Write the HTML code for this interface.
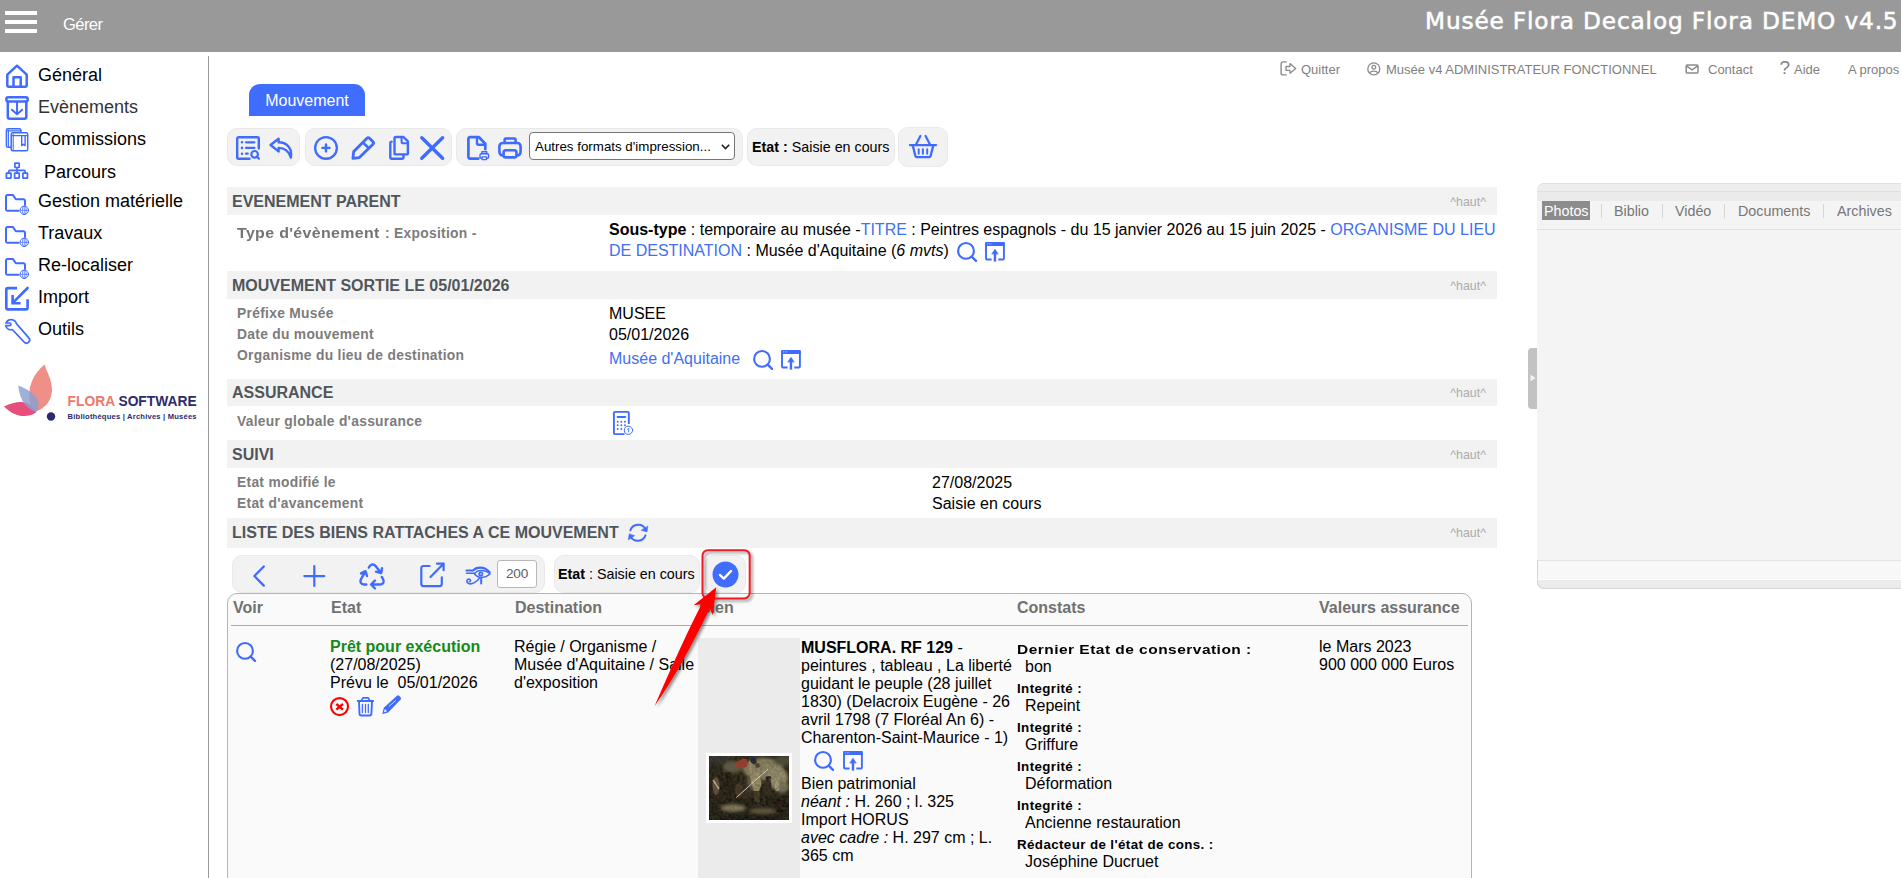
<!DOCTYPE html>
<html lang="fr">
<head>
<meta charset="utf-8">
<title>Musée Flora - Mouvement</title>
<style>
*{box-sizing:border-box}
html,body{margin:0;padding:0}
body{width:1901px;height:878px;overflow:hidden;position:relative;background:#fff;font-family:"Liberation Sans",Arial,sans-serif;color:#000;font-size:16px}
svg{display:block;overflow:visible}
.ic{position:absolute;fill:none;stroke:#3f6bff;stroke-width:2;stroke-linecap:round;stroke-linejoin:round}
.icg{position:absolute;fill:none;stroke:#8a8a8a;stroke-width:2;stroke-linecap:round;stroke-linejoin:round}
.icr{position:absolute;fill:none;stroke:#ff0000;stroke-width:2;stroke-linecap:round;stroke-linejoin:round}
.bl{color:#4170f2}
/* header */
#hdr{position:absolute;left:0;top:0;width:1901px;height:52px;background:#999}
#hdr .bar{position:absolute;left:5px;width:32px;height:4px;background:#fff}
#gerer{position:absolute;left:63px;top:14px;color:#fff;font-size:16.5px;line-height:20px;letter-spacing:-0.55px}
#title{position:absolute;right:2.5px;top:5.5px;color:#fff;font-family:'DejaVu Sans','Liberation Sans',sans-serif;font-size:23.2px;line-height:30px;font-weight:normal;white-space:nowrap;letter-spacing:0.86px;-webkit-text-stroke:0.55px #fff}
/* sidebar */
#side .it{position:absolute;left:38px;font-size:18px;line-height:22px;white-space:nowrap;color:#000}
#divider{position:absolute;left:208px;top:56px;width:1px;height:830px;background:#9a9a9a}
/* top links */
#links span{position:absolute;top:61.6px;font-size:13px;line-height:16px;color:#7f7f7f;white-space:nowrap}
/* tab */
#tab{position:absolute;left:249px;top:84px;width:116px;height:32px;background:#416dff;border-radius:11px 11px 0 0;color:#fff;font-size:16px;line-height:33px;text-align:center}
/* toolbar */
.grp{position:absolute;top:128px;height:38px;background:#f2f2f2;border:1px solid #e9e9e9;border-radius:10px}
.sec{position:absolute;left:227px;width:1270px;height:28px;background:#f2f2f2;color:#50565b;font-weight:bold;font-size:16px;line-height:30px;padding-left:5px;white-space:nowrap}
.sec i{position:absolute;right:11px;top:-0.5px;font-style:normal;font-weight:normal;font-size:12.4px;color:#acacac}
.lbl{position:absolute;left:237px;font-weight:bold;font-size:13.8px;line-height:18px;color:#7c7c7c;white-space:nowrap;letter-spacing:0.3px}
.lblw{transform:scaleX(1.154);transform-origin:0 50%}
.val{position:absolute;font-size:16px;line-height:21px;white-space:nowrap}
.t{position:absolute;white-space:nowrap;font-size:16px;line-height:18px}
.th{position:absolute;top:599px;font-weight:bold;font-size:16px;line-height:18px;color:#717171;white-space:nowrap}
.cl{position:absolute;left:1017px;font-weight:bold;font-size:13.33px;line-height:16px;white-space:nowrap;letter-spacing:0.4px}
.clw{transform:scaleX(1.164);transform-origin:0 50%}
.cv{position:absolute;left:1025px;font-size:16px;line-height:18px;white-space:nowrap}
</style>
</head>
<body>
<div id="hdr">
  <div class="bar" style="top:11px"></div><div class="bar" style="top:20px"></div><div class="bar" style="top:29px"></div>
  <div id="gerer">Gérer</div>
  <div id="title">Musée Flora Decalog Flora DEMO v4.5</div>
</div>
<div id="side"><svg class="ic" style="left:6px;top:64px;" width="22" height="24" viewBox="0 0 22 24"><path d="M11 1.7 L1.3 10.6 V21.2 a1.5 1.5 0 0 0 1.5 1.5 H19.2 a1.5 1.5 0 0 0 1.5 -1.5 V10.6 Z" stroke-width="2.5"/><path d="M7.5 22.5 V13.3 H14.7 V22.5" stroke-width="2.5"/></svg><svg class="ic" style="left:5px;top:96px;" width="24" height="24" viewBox="0 0 24 24"><rect x="1.4" y="1.3" width="21.3" height="4.2" rx="1.8" stroke-width="2.5"/><path d="M2.8 6 V20.8 a2 2 0 0 0 2 2 H19.3 a2 2 0 0 0 2 -2 V6" stroke-width="2.5"/><path d="M12.04 6.6 V17.6 M6.9 13.7 L12.04 18.3 L17.2 13.7" stroke-width="2"/></svg><svg class="ic" style="left:5px;top:127px;" width="25" height="26" viewBox="0 0 25 26"><rect x="1.4" y="1.7" width="14.5" height="18.6" rx="1.6" stroke-width="1.5"/><path d="M2.6 3.9 H16" stroke-width="1.3"/><path d="M3.4 3 V19.5" stroke-width="1.1"/><rect x="6.2" y="5.8" width="16.5" height="18" rx="1.6" stroke-width="1.5" fill="#fff"/><path d="M7.4 8.7 H22.6" stroke-width="1.3"/><path d="M8.2 7 V23" stroke-width="1.1"/><path d="M16.7 9.2 V18.6 L18.4 17.2 L20.1 18.6 V9.2" stroke-width="1.4"/></svg><svg class="ic" style="left:5px;top:161px;" width="24" height="20" viewBox="0 0 24 20"><rect x="9.9" y="2.2" width="4.3" height="4.3" rx="0.4" stroke-width="1.7"/><rect x="1.4" y="12.2" width="4.6" height="5" rx="0.4" stroke-width="1.7"/><rect x="9.6" y="12.2" width="4.6" height="5" rx="0.4" stroke-width="1.7"/><rect x="17.9" y="12.2" width="4.6" height="5" rx="0.4" stroke-width="1.7"/><path d="M12 6.5 V12.2 M3.7 12.2 V10.4 a1 1 0 0 1 1 -1 H19.2 a1 1 0 0 1 1 1 V12.2" stroke-width="1.6"/></svg><svg class="ic" style="left:5px;top:190px;" width="25" height="26" viewBox="0 0 25 26"><path d="M13.5 20.8 H2.6 a1.6 1.6 0 0 1 -1.6 -1.6 V6.5 a1.6 1.6 0 0 1 1.6 -1.6 H7.8 L10.8 9.3 H18.4 a1.6 1.6 0 0 1 1.6 1.6 V15" stroke-width="2"/><g stroke-width="0.8"><circle cx="19.3" cy="20.3" r="4.2" stroke-width="1"/><path d="M15.2 20.3 H23.4 M19.3 16.1 V24.5" stroke-width="0.7"/><ellipse cx="19.3" cy="20.3" rx="2" ry="4.2" stroke-width="0.7"/></g></svg><svg class="ic" style="left:5px;top:222px;" width="25" height="26" viewBox="0 0 25 26"><path d="M13.5 20.8 H2.6 a1.6 1.6 0 0 1 -1.6 -1.6 V6.5 a1.6 1.6 0 0 1 1.6 -1.6 H7.8 L10.8 9.3 H18.4 a1.6 1.6 0 0 1 1.6 1.6 V15" stroke-width="2"/><g stroke-width="0.8"><circle cx="19.3" cy="20.3" r="4.2" stroke-width="1"/><path d="M15.2 20.3 H23.4 M19.3 16.1 V24.5" stroke-width="0.7"/><ellipse cx="19.3" cy="20.3" rx="2" ry="4.2" stroke-width="0.7"/></g></svg><svg class="ic" style="left:5px;top:254px;" width="25" height="26" viewBox="0 0 25 26"><path d="M13.5 20.8 H2.6 a1.6 1.6 0 0 1 -1.6 -1.6 V6.5 a1.6 1.6 0 0 1 1.6 -1.6 H7.8 L10.8 9.3 H18.4 a1.6 1.6 0 0 1 1.6 1.6 V15" stroke-width="2"/><g stroke-width="0.8"><circle cx="19.3" cy="20.3" r="4.2" stroke-width="1"/><path d="M15.2 20.3 H23.4 M19.3 16.1 V24.5" stroke-width="0.7"/><ellipse cx="19.3" cy="20.3" rx="2" ry="4.2" stroke-width="0.7"/></g></svg><svg class="ic" style="left:5px;top:286px;" width="24" height="25" viewBox="0 0 24 25"><path d="M12 2.1 H2.8 A1.5 1.5 0 0 0 1.3 3.6 V21.9 A1.5 1.5 0 0 0 2.8 23.4 H21.1 A1.5 1.5 0 0 0 22.6 21.9 V13.2" stroke-width="2.6" stroke-linecap="butt"/><path d="M22.6 2 L7.8 16.9" stroke-width="2.6"/><path d="M7.6 9 V17.3 H15.6" stroke-width="2.6" stroke-linecap="butt" stroke-linejoin="miter"/></svg><svg class="ic" style="left:5px;top:318px;" width="25" height="26" viewBox="0 0 25 26"><path d="M1 5 A5.5 5.5 0 0 1 11.4 5.6 L23.6 19.6 A3 3 0 0 1 19.2 24.2 L7.3 11.5 A5.5 5.5 0 0 1 0.7 7.7 L4.6 7.7 A1.35 1.35 0 0 0 4.6 5 Z" stroke-width="1.7"/></svg>
  <div class="it" style="top:64px">Général</div>
  <div class="it" style="top:96px;color:#333">Evènements</div>
  <div class="it" style="top:128px">Commissions</div>
  <div class="it" style="top:161px;left:44px">Parcours</div>
  <div class="it" style="top:190px">Gestion matérielle</div>
  <div class="it" style="top:222px">Travaux</div>
  <div class="it" style="top:254px">Re-localiser</div>
  <div class="it" style="top:286px">Import</div>
  <div class="it" style="top:318px">Outils</div>
<svg style="position:absolute;left:0;top:360px" width="205" height="66" viewBox="0 0 205 66">
  <path d="M44.5 4.5 C31 16 25 32 33 52 C45 50 52 40 52 30 C52 20 47 12 44.5 4.5 Z" fill="#f08f87"/>
  <path d="M4 46.5 C14 42 24 40 30 45 C33 47 35 50 36 52.5 C28 58 15 58 4 46.5 Z" fill="#e84d7c"/>
  <path d="M18.2 25.4 C25 28 36 33 38.7 42 C39.5 46 38 49.5 36.3 52.2 C27 49 20 42 18.2 25.4 Z" fill="#8b9fd0" fill-opacity="0.82"/>
  <circle cx="51" cy="56.5" r="4.2" fill="#2d2a6e"/>
  <text x="67.6" y="45.5" font-family="'Liberation Sans',Arial,sans-serif" font-weight="bold" font-size="13.8" letter-spacing="0" fill="#f0776c">FLORA <tspan fill="#2d2a6e">SOFTWARE</tspan></text>
  <text x="67.6" y="59" font-family="'Liberation Sans',Arial,sans-serif" font-weight="bold" font-size="7.6" letter-spacing="0.2" fill="#2d2a6e">Bibliothèques | Archives | Musées</text>
</svg>
</div>
<div id="divider"></div>
<div id="links"><svg class="icg" style="left:1280px;top:60.5px;" width="17" height="15" viewBox="0 0 17 15"><path d="M6.2 0.9 H3.1 a2 2 0 0 0 -2 2 V11.9 a2 2 0 0 0 2 2 H6.2" stroke-width="1.4"/><path d="M6 5.5 H10 V2.6 L15.7 7.4 L10 12.2 V9.4 H6 Z" stroke-width="1.3"/></svg><svg class="icg" style="left:1367px;top:62px;" width="14" height="14" viewBox="0 0 14 14"><circle cx="6.8" cy="6.9" r="6" stroke-width="1.3"/><circle cx="6.8" cy="5.3" r="1.9" stroke-width="1.2"/><path d="M3.1 10.9 C4 8.4 9.6 8.4 10.5 10.9" stroke-width="1.3"/></svg><svg class="icg" style="left:1685px;top:63.5px;" width="14" height="11" viewBox="0 0 14 11"><rect x="1.2" y="1.1" width="11.8" height="8" rx="1.2" stroke-width="1.5"/><path d="M1.8 2.2 L7.1 5.8 L12.4 2.2" stroke-width="1.4"/></svg>
  <span style="left:1301px">Quitter</span>
  <span style="left:1386px">Musée v4 ADMINISTRATEUR FONCTIONNEL</span>
  <span style="left:1708px">Contact</span>
  <span style="left:1779.5px;font-size:19px;top:59.5px">?</span>
  <span style="left:1794px">Aide</span>
  <span style="left:1848px">A propos</span>
</div>
<div id="tab">Mouvement</div>
<div class="grp" style="left:227px;width:73px"></div><div class="grp" style="left:305px;width:147px"></div><div class="grp" style="left:456px;width:287px"></div><div class="grp" style="left:747px;width:148px"></div><div class="grp" style="left:898px;width:50px;top:127px;height:40px"></div><svg class="ic" style="left:236px;top:136px;" width="24" height="24" viewBox="0 0 24 24"><path d="M13.5 22.8 H2.7 a1.5 1.5 0 0 1 -1.5 -1.5 V2.7 a1.5 1.5 0 0 1 1.5 -1.5 H21.3 a1.5 1.5 0 0 1 1.5 1.5 V12.5" stroke-width="2.4"/><path d="M10 6.3 H18.4 M10 11.9 H18.4 M10 17.7 H11.8" stroke-width="2.2"/><path d="M6 6.3 h0.01 M6 11.9 h0.01 M6 17.7 h0.01" stroke-width="2.6"/><circle cx="18.6" cy="18.3" r="3.3" stroke-width="2.2"/><path d="M21.2 20.9 L23 22.7" stroke-width="2.2"/></svg><svg class="ic" style="left:268.5px;top:136px;" width="25" height="24" viewBox="0 0 25 24"><path d="M9.6 2.8 L1.5 9 L9.6 15.4 V11.9 C15 11.9 19.5 14 21.9 21.6 C23.4 13 18.5 6.5 9.6 6.3 Z" stroke-width="2.4"/></svg><svg class="ic" style="left:314px;top:136px;" width="24" height="24" viewBox="0 0 24 24"><circle cx="12" cy="11.9" r="10.85" stroke-width="2.3"/><path d="M12 8.4 V15.4 M8.5 11.9 H15.5" stroke-width="2.4"/></svg><svg class="ic" style="left:351px;top:136px;" width="24.5" height="24" viewBox="0 0 24.5 24"><path d="M16.2 2 a1.4 1.4 0 0 1 2 0 L22.2 6 a1.4 1.4 0 0 1 0 2 L8.4 21.6 L1.9 22.3 L2.7 15.6 Z" stroke-width="2.8"/><path d="M13 7.5 L17.6 12" stroke-width="2.6"/></svg><svg class="ic" style="left:388px;top:136px;" width="22" height="24" viewBox="0 0 22 24"><path d="M8 1 H15.5 L19.9 5.4 V16.9 a1.5 1.5 0 0 1 -1.5 1.5 H8 a1.5 1.5 0 0 1 -1.5 -1.5 V2.5 a1.5 1.5 0 0 1 1.5 -1.5 Z" stroke-width="2.4"/><path d="M13.6 1.6 V6 a1.3 1.3 0 0 0 1.3 1.3 H19.3" stroke-width="2"/><path d="M3.6 5.6 a1.5 1.5 0 0 0 -1.3 1.5 V21.3 a1.5 1.5 0 0 0 1.5 1.5 H14 a1.5 1.5 0 0 0 1.5 -1.5 V19.5" stroke-width="2.4"/></svg><svg class="ic" style="left:420px;top:136px;" width="24.4" height="24" viewBox="0 0 24.4 24"><path d="M1.8 1.7 L22.6 22.3 M22.6 1.7 L1.8 22.3" stroke-width="3.4"/></svg><svg class="ic" style="left:467px;top:136px;" width="23" height="24" viewBox="0 0 23 24"><path d="M11.4 22.6 H2.9 a1.5 1.5 0 0 1 -1.5 -1.5 V2.7 a1.5 1.5 0 0 1 1.5 -1.5 H12 L18.3 7.8 V13.2" stroke-width="2.7"/><path d="M10 2 V7.3 a1.4 1.4 0 0 0 1.4 1.4 H17.5" stroke-width="2.4"/><g stroke-width="1.4"><rect x="13" y="17.7" width="8.6" height="4.6" rx="1.2" fill="#f2f2f2"/><path d="M14.9 17.7 V15.8 H19.7 V17.7"/><rect x="15" y="20.9" width="4.6" height="2.7" rx="0.5" fill="#f2f2f2"/></g></svg><svg class="ic" style="left:498px;top:136px;" width="24" height="24" viewBox="0 0 24 24"><path d="M6.6 7 V3.6 a1.2 1.2 0 0 1 1.2 -1.2 H16.4 a1.2 1.2 0 0 1 1.2 1.2 V7" stroke-width="2.5"/><rect x="1.4" y="7" width="21.2" height="12.5" rx="3.4" stroke-width="2.6"/><rect x="5.6" y="14.2" width="12.9" height="7.2" rx="2.2" fill="#f2f2f2" stroke-width="2.6"/></svg><div style="position:absolute;left:529px;top:132px;width:206px;height:28px;background:#fff;border:1px solid #767676;border-radius:4px;font-size:13.33px;line-height:27.6px;padding-left:5px;white-space:nowrap">Autres formats d'impression...<svg style="position:absolute;left:191px;top:11px;fill:none;stroke:#222;stroke-width:1.6" width="9" height="6" viewBox="0 0 9 6"><path d="M0.8 0.8 L4.5 4.6 L8.2 0.8"/></svg></div><div class="t" style="left:752px;top:138px;font-size:14.3px"><b>Etat :</b> Saisie en cours</div><svg class="ic" style="left:909px;top:135px;" width="28" height="24" viewBox="0 0 28 24"><path d="M0.9 10.1 H27.1" stroke-width="2.1"/><path d="M11.4 0.9 L7 9.6 M16.6 0.9 L21 9.6" stroke-width="2.2"/><path d="M3.8 10.6 L6.4 21 a1.6 1.6 0 0 0 1.5 1.2 H20.1 a1.6 1.6 0 0 0 1.5 -1.2 L24.2 10.6" stroke-width="2.3"/><path d="M9.7 14.2 V18.8 M13.9 14.2 V18.8 M18.2 14.2 V18.8" stroke-width="2"/></svg>
<div class="sec" style="top:187px">EVENEMENT PARENT<i>^haut^</i></div>
<div class="lbl lblw" style="top:224.5px;color:#747474">Type d'évènement</div>
<div class="lbl" style="left:385px;top:224.5px">: Exposition -</div>
<div class="val" style="left:609px;top:219px"><b>Sous-type</b> : temporaire au musée -<span class="bl">TITRE</span> : Peintres espagnols - du 15 janvier 2026 au 15 juin 2025 - <span class="bl">ORGANISME DU LIEU</span></div>
<div class="val" style="left:609px;top:240px"><span class="bl">DE DESTINATION</span> : Musée d'Aquitaine (<i>6 mvts</i>)</div>
<svg class="ic" style="left:957px;top:242px;" width="20" height="20" viewBox="0 0 20 20"><circle cx="9" cy="8.9" r="7.9" stroke-width="2.1"/><path d="M14.7 14.6 L19 18.9" stroke-width="2.3"/></svg><svg class="ic" style="left:985px;top:242px;" width="20" height="20" viewBox="0 0 20 20"><path d="M6.6 17.5 H2 a1 1 0 0 1 -1 -1 V1.9 a1 1 0 0 1 1 -1 H17.9 a1 1 0 0 1 1 1 V16.5 a1 1 0 0 1 -1 1 H13.3" stroke-width="1.9" stroke-linecap="butt"/><rect x="0.1" y="0" width="19.7" height="3.9" rx="1" fill="#3f6bff" stroke="none"/><path d="M2.2 1.9 h0.7 M3.9 1.9 h0.7 M5.6 1.9 h0.7" stroke="#dfe7ff" stroke-width="1" stroke-linecap="butt"/><path d="M9.95 19.6 V11" stroke-width="2.4" stroke-linecap="butt"/><path d="M6.9 11.8 L9.95 7.2 L13.1 11.8 Z" fill="#3f6bff" stroke-width="0.6"/></svg>
<div class="sec" style="top:271px">MOUVEMENT SORTIE LE 05/01/2026<i>^haut^</i></div>
<div class="lbl" style="top:304.7px">Préfixe Musée</div>
<div class="lbl" style="top:325.7px">Date du mouvement</div>
<div class="lbl" style="top:346.7px">Organisme du lieu de destination</div>
<div class="val" style="left:609px;top:303px">MUSEE</div>
<div class="val" style="left:609px;top:324px">05/01/2026</div>
<div class="val bl" style="left:609px;top:348px">Musée d'Aquitaine</div>
<svg class="ic" style="left:752.5px;top:350px;" width="20" height="20" viewBox="0 0 20 20"><circle cx="9" cy="8.9" r="7.9" stroke-width="2.1"/><path d="M14.7 14.6 L19 18.9" stroke-width="2.3"/></svg><svg class="ic" style="left:781px;top:350px;" width="20" height="20" viewBox="0 0 20 20"><path d="M6.6 17.5 H2 a1 1 0 0 1 -1 -1 V1.9 a1 1 0 0 1 1 -1 H17.9 a1 1 0 0 1 1 1 V16.5 a1 1 0 0 1 -1 1 H13.3" stroke-width="1.9" stroke-linecap="butt"/><rect x="0.1" y="0" width="19.7" height="3.9" rx="1" fill="#3f6bff" stroke="none"/><path d="M2.2 1.9 h0.7 M3.9 1.9 h0.7 M5.6 1.9 h0.7" stroke="#dfe7ff" stroke-width="1" stroke-linecap="butt"/><path d="M9.95 19.6 V11" stroke-width="2.4" stroke-linecap="butt"/><path d="M6.9 11.8 L9.95 7.2 L13.1 11.8 Z" fill="#3f6bff" stroke-width="0.6"/></svg>
<div class="sec" style="top:379px;height:27px;line-height:28px">ASSURANCE<i>^haut^</i></div>
<div class="lbl" style="top:412.7px">Valeur globale d'assurance</div>
<svg class="ic" style="left:613px;top:411px;" width="21" height="25" viewBox="0 0 21 25"><path d="M15.8 13 V1.9 a1 1 0 0 0 -1 -1 H1.9 a1 1 0 0 0 -1 1 V22.1 a1 1 0 0 0 1 1 H11.5" stroke-width="1.9" stroke-linecap="butt"/><path d="M4.6 6 H12.2" stroke-width="2.1"/><path d="M4.7 10.7 h0.01 M8.3 10.7 h0.01 M11.9 10.7 h0.01 M4.7 14.3 h0.01 M8.3 14.3 h0.01 M11.9 14.3 h0.01 M4.7 18 h0.01 M8.3 18 h0.01" stroke-width="1.9"/><circle cx="15.5" cy="19.3" r="4.1" fill="#fff" stroke-width="1"/><path d="M14.6 18.2 L15.7 17.4 V21" stroke-width="0.9"/></svg>
<div class="sec" style="top:440px">SUIVI<i>^haut^</i></div>
<div class="lbl" style="top:473.7px">Etat modifié le</div>
<div class="lbl" style="top:494.7px">Etat d'avancement</div>
<div class="val" style="left:932px;top:472px">27/08/2025</div>
<div class="val" style="left:932px;top:493px">Saisie en cours</div>
<div class="sec" style="top:518px;height:30px;line-height:30px">LISTE DES BIENS RATTACHES A CE MOUVEMENT<i>^haut^</i></div>
<svg class="ic" style="left:627px;top:523px;" width="22" height="20" viewBox="0 0 22 20"><path d="M3.3 7.4 A8.3 8.3 0 0 1 18.6 6.3" stroke-width="1.9"/><path d="M20.9 3.2 L20 9 L14.4 7.2 Z" fill="#3f6bff" stroke-width="0.5"/><path d="M18.5 12.3 A8.3 8.3 0 0 1 3.6 13.7" stroke-width="1.9"/><path d="M2.2 11 L1.2 16.9 L7.5 12.8 Z" fill="#3f6bff" stroke-width="0.5"/></svg><div class="grp" style="left:232px;top:555px;width:313px"></div><div class="grp" style="left:554px;top:555px;width:146px"></div><div class="grp" style="left:705px;top:555px;width:41px"></div><svg class="ic" style="left:252px;top:564px;" width="14" height="24" viewBox="0 0 14 24"><path d="M11.8 2.5 L2.4 12 L11.8 21.6" stroke-width="2.3"/></svg><svg class="ic" style="left:303px;top:565px;" width="22" height="22" viewBox="0 0 22 22"><path d="M11.3 1.2 V21 M1.3 11.1 H21.3" stroke-width="2.2"/></svg><svg class="ic" style="left:359px;top:563px;" width="27" height="26" viewBox="0 0 27 26"><g stroke-width="2.4"><path d="M9.8 4.6 C11 1.2 14.6 0.4 16.6 3 L21.8 9.6 M23 5.2 L22.2 10 L17 8.6"/><path d="M6.2 8.6 L1.9 16.4 C0.6 19 2 21.5 5 21.5 H7.3 M2 10.4 L6.5 8.2 L8 13"/><path d="M22.8 13.9 L24.3 16.8 C25.5 19 24 21.5 21.5 21.5 H12.3 M16 17.5 L12 21.5 L16 25.5"/></g></svg><svg class="ic" style="left:419px;top:562px;" width="26" height="26" viewBox="0 0 26 26"><path d="M10.6 4 H4.3 a2 2 0 0 0 -2 2 V22.1 a2 2 0 0 0 2 2 H20.8 a2 2 0 0 0 2 -2 V15.3" stroke-width="2.2"/><path d="M11.5 15 L24.3 1.9 M18 1.6 H24.6 V8.2" stroke-width="2.2"/></svg><svg class="ic" style="left:465px;top:566px;" width="26" height="20" viewBox="0 0 26 20"><path d="M1.5 4.5 H8 C11 1 19 -0.5 24.6 6.3" stroke-width="2.2"/><path d="M1.5 7.3 H9.5" stroke-width="1.5"/><path d="M9.5 8 C12 3.3 20 3.3 25 8 C20 12.5 13 12.5 9.5 8 Z" stroke-width="1.5"/><circle cx="15.8" cy="8.1" r="2.5" fill="#3f6bff" stroke="none"/><circle cx="16" cy="8" r="0.8" fill="#e6ecff" stroke="none"/><path d="M16.2 11.5 V17.4" stroke-width="2"/><path d="M14.5 11.8 C12 16 7 18.6 3.6 17.6 C1 16.6 1.5 13 4 13 C6 13.2 6 15.6 4.3 15.7" stroke-width="1.6"/></svg><div style="position:absolute;left:497px;top:560px;width:40px;height:28px;background:#fff;border:1px solid #b8b8b8;border-radius:3px;font-size:13.6px;line-height:25px;color:#5c6166;text-align:center;letter-spacing:-0.3px">200</div><div class="t" style="left:558px;top:564.6px;font-size:14.3px"><b>Etat</b> : Saisie en cours</div><svg style="position:absolute;left:712px;top:561px" width="27" height="27" viewBox="0 0 27 27"><circle cx="13.5" cy="13.5" r="13" fill="#416dff"/><path d="M8 14 L11.8 17.6 L19 10" fill="none" stroke="#fff" stroke-width="2.4" stroke-linecap="round" stroke-linejoin="round"/></svg><div style="position:absolute;left:227px;top:593px;width:1245px;height:300px;background:#fafafa;border:1px solid #b5b5b5;border-radius:10px"></div><div style="position:absolute;left:231px;top:625px;width:1237px;height:1px;background:#aaa"></div><div class="th" style="left:233px">Voir</div><div class="th" style="left:331px">Etat</div><div class="th" style="left:515px">Destination</div><div class="th" style="left:699px">Bien</div><div class="th" style="left:1017px">Constats</div><div class="th" style="left:1319px">Valeurs assurance</div><svg class="ic" style="left:236px;top:642px;" width="20" height="20" viewBox="0 0 20 20"><circle cx="9" cy="8.9" r="7.9" stroke-width="2.1"/><path d="M14.7 14.6 L19 18.9" stroke-width="2.3"/></svg>
<div class="t" style="left:330px;top:638px;font-weight:bold;color:#158a15">Prêt pour exécution</div>
<div class="t" style="left:330px;top:656px">(27/08/2025)</div>
<div class="t" style="left:330px;top:674px">Prévu le&nbsp; 05/01/2026</div>
<svg class="icr" style="left:330px;top:697.1px;" width="19.2" height="19.2" viewBox="0 0 19.2 19.2"><circle cx="9.55" cy="9.6" r="8.5" stroke-width="2.1"/><path d="M6.3 7 L13 12.6 M13 7 L6.3 12.6" stroke-width="2.4" stroke-linecap="butt"/></svg><svg class="ic" style="left:357px;top:697px;" width="17" height="19.5" viewBox="0 0 17 19.5"><path d="M0.7 4 H16.1" stroke-width="1.9"/><path d="M4.4 3.4 L5.9 0.9 H11.2 L12.6 3.4" stroke-width="1.6"/><path d="M2 4.7 L2.5 16.8 a1.8 1.8 0 0 0 1.8 1.7 H12.6 a1.8 1.8 0 0 0 1.8 -1.7 L15 4.7" stroke-width="1.9"/><path d="M5.4 7.3 V15.5 M8.5 7.3 V15.5 M11.3 7.3 V15.5" stroke-width="1.3"/></svg><svg class="ic" style="left:382px;top:695px;" width="19.4" height="19.2" viewBox="0 0 19.4 19.2"><path d="M15 0.7 a1.6 1.6 0 0 1 2.2 0 L18.7 2.4 a1.6 1.6 0 0 1 0 2.2 L6.2 17.4 L0.3 18.9 L1.8 12.8 Z" fill="#3f6bff" stroke="none"/><path d="M2.9 14 L5.1 16.2 L1.9 17.2 Z" fill="#fafafa" stroke="none"/><path d="M7.2 11.2 L13.6 5.6" stroke="#dfe6ff" stroke-width="0.9"/></svg>
<div class="t" style="left:514px;top:638px">Régie / Organisme /</div>
<div class="t" style="left:514px;top:656px">Musée d'Aquitaine / Salle</div>
<div class="t" style="left:514px;top:674px">d'exposition</div>
<div style="position:absolute;left:698px;top:638px;width:102px;height:250px;background:#ebebeb"></div>
<svg style="position:absolute;left:706px;top:753px" width="86" height="70" viewBox="0 0 86 70">
  <defs>
    <filter id="pb" x="-10%" y="-10%" width="120%" height="120%"><feGaussianBlur stdDeviation="1.5"/></filter>
    <filter id="pb2" x="-10%" y="-10%" width="120%" height="120%"><feGaussianBlur stdDeviation="0.6"/></filter>
    <filter id="pn" x="0" y="0" width="100%" height="100%"><feTurbulence type="fractalNoise" baseFrequency="0.35" numOctaves="2" seed="7" result="n"/><feColorMatrix type="matrix" values="0 0 0 0 0.1  0 0 0 0 0.08  0 0 0 0 0.04  0.9 0.9 0 0 -0.55"/></filter>
    <clipPath id="pc"><rect x="3" y="3" width="80" height="64"/></clipPath>
  </defs>
  <rect width="86" height="70" fill="#fff"/>
  <g clip-path="url(#pc)"><g transform="translate(3 3)">
    <rect width="80" height="64" fill="#211c12"/>
    <g filter="url(#pb)">
      <rect x="-4" y="-4" width="26" height="12" fill="#262a2b"/>
      <ellipse cx="24" cy="11" rx="10" ry="6" fill="#5f5b45"/>
      <ellipse cx="54" cy="13" rx="20" ry="11" fill="#8e8867"/>
      <ellipse cx="68" cy="22" rx="11" ry="11" fill="#9a9473"/>
      <ellipse cx="74" cy="5" rx="9" ry="5" fill="#474a3a"/>
      <ellipse cx="45" cy="26" rx="7" ry="9" fill="#6a644b"/>
      <ellipse cx="73" cy="31" rx="7" ry="6" fill="#7c775c"/>
      <rect x="-4" y="40" width="90" height="30" fill="#19150c"/>
      <ellipse cx="13" cy="33" rx="19" ry="16" fill="#1d1911"/>
      <ellipse cx="36" cy="36" rx="7" ry="8" fill="#2a2317"/>
      <ellipse cx="24" cy="52" rx="12" ry="3" fill="#8a8262"/>
      <ellipse cx="54" cy="55" rx="13" ry="2.6" fill="#625a41"/>
      <ellipse cx="72" cy="50" rx="10" ry="6" fill="#14110b"/>
      <ellipse cx="40" cy="62" rx="34" ry="3" fill="#100d07"/>
    </g>
    <g filter="url(#pb2)">
      <path d="M26.4 6.5 L34 2.6 L38.2 3.2 L38 11 L30 12.6 L27.5 11 Z" fill="#a8382b"/>
      <path d="M40.5 0.5 L47 0.5 L47.8 7 L44.5 8.5 L42 6 Z" fill="#1f2230"/>
      <path d="M40 4 L46 15 L50 17 L52.5 28 L50 35 L45 35 L42 26 L41 17 Z" fill="#a39570"/><path d="M44 35 L50 35 L51 46 L46 46 Z" fill="#3a3222"/>
      <path d="M46 8 L50 7 L51 11 L47 12 Z" fill="#4a3b28"/>
      <ellipse cx="19" cy="27" rx="4.5" ry="10" fill="#15120c"/>
      <rect x="16.5" y="16" width="5" height="4" fill="#15120c"/>
      <ellipse cx="7" cy="30" rx="3.5" ry="9" fill="#5e5038"/>
      <path d="M4 24 L10 33" stroke="#cfc7ae" stroke-width="1.4"/>
      <ellipse cx="30" cy="34" rx="4" ry="7" fill="#3d3020"/>
      <ellipse cx="59" cy="31" rx="3.6" ry="10" fill="#29231a"/>
      <ellipse cx="59.5" cy="21.5" rx="3" ry="1.6" fill="#1b1812"/>
      <ellipse cx="68" cy="30" rx="2.5" ry="5" fill="#b0a88c"/>
      <path d="M27.3 41.6 L58.7 13.4" stroke="#ece9e2" stroke-width="1"/>
    </g>
    <rect width="80" height="64" filter="url(#pn)" opacity="0.7"/>
  </g></g>
</svg><div class="t" style="left:801px;top:639px"><b>MUSFLORA. RF 129</b> -</div><div class="t" style="left:801px;top:657px">peintures , tableau , La liberté</div><div class="t" style="left:801px;top:675px">guidant le peuple (28 juillet</div><div class="t" style="left:801px;top:693px">1830) (Delacroix Eugène - 26</div><div class="t" style="left:801px;top:711px">avril 1798 (7 Floréal An 6) -</div><div class="t" style="left:801px;top:729px">Charenton-Saint-Maurice - 1)</div><div class="t" style="left:801px;top:775px">Bien patrimonial</div><div class="t" style="left:801px;top:793px"><i>néant :</i> H. 260 ; l. 325</div><div class="t" style="left:801px;top:811px">Import HORUS</div><div class="t" style="left:801px;top:829px"><i>avec cadre :</i> H. 297 cm ; L.</div><div class="t" style="left:801px;top:847px">365 cm</div><svg class="ic" style="left:814px;top:751px;" width="20" height="20" viewBox="0 0 20 20"><circle cx="9" cy="8.9" r="7.9" stroke-width="2.1"/><path d="M14.7 14.6 L19 18.9" stroke-width="2.3"/></svg><svg class="ic" style="left:842.5px;top:751px;" width="20" height="20" viewBox="0 0 20 20"><path d="M6.6 17.5 H2 a1 1 0 0 1 -1 -1 V1.9 a1 1 0 0 1 1 -1 H17.9 a1 1 0 0 1 1 1 V16.5 a1 1 0 0 1 -1 1 H13.3" stroke-width="1.9" stroke-linecap="butt"/><rect x="0.1" y="0" width="19.7" height="3.9" rx="1" fill="#3f6bff" stroke="none"/><path d="M2.2 1.9 h0.7 M3.9 1.9 h0.7 M5.6 1.9 h0.7" stroke="#dfe7ff" stroke-width="1" stroke-linecap="butt"/><path d="M9.95 19.6 V11" stroke-width="2.4" stroke-linecap="butt"/><path d="M6.9 11.8 L9.95 7.2 L13.1 11.8 Z" fill="#3f6bff" stroke-width="0.6"/></svg><div class="cl clw" style="top:642px">Dernier Etat de conservation :</div><div class="cv" style="top:658px">bon</div><div class="cl" style="top:681px">Integrité :</div><div class="cv" style="top:697px">Repeint</div><div class="cl" style="top:720px">Integrité :</div><div class="cv" style="top:736px">Griffure</div><div class="cl" style="top:759px">Integrité :</div><div class="cv" style="top:775px">Déformation</div><div class="cl" style="top:798px">Integrité :</div><div class="cv" style="top:814px">Ancienne restauration</div><div class="cl" style="top:837px">Rédacteur de l'état de cons. :</div><div class="cv" style="top:853px">Joséphine Ducruet</div><div class="cl" style="top:876px">Date de l'état :</div>
<div class="t" style="left:1319px;top:638px">le Mars 2023</div>
<div class="t" style="left:1319px;top:656px">900 000 000 Euros</div>

<div style="position:absolute;left:1537px;top:183px;width:380px;height:406px;background:#f4f4f4;border-radius:7px"></div>
<div style="position:absolute;left:1537px;top:183px;width:371px;height:9px;background:#eeeeee;border-top:1px solid #e0e0e0;border-bottom:1px solid #e0e0e0;border-radius:7px 0 0 0"></div>
<div style="position:absolute;left:1537px;top:192px;width:371px;height:9px;background:#ebebeb"></div>
<div style="position:absolute;left:1537px;top:229px;width:371px;height:1px;background:#e2e2e2"></div>
<div style="position:absolute;left:1537px;top:560px;width:371px;height:20px;background:#f8f8f8;border-top:1px solid #e4e4e4;border-left:1px solid #d4d4d4"></div>
<div style="position:absolute;left:1537px;top:579px;width:371px;height:10px;background:#ececec;border-top:1px solid #fff;border-left:1px solid #d4d4d4;border-bottom:1px solid #d4d4d4;border-radius:0 0 0 7px"></div>
<div style="position:absolute;left:1542px;top:201px;width:48px;height:19px;background:#8c8c8c"></div>
<div class="t" style="left:1544px;top:202px;font-size:14.3px;line-height:19px;color:#fff">Photos</div>
<div class="t" style="left:1614px;top:202px;font-size:14.3px;line-height:19px;color:#777">Biblio</div>
<div class="t" style="left:1675px;top:202px;font-size:14.3px;line-height:19px;color:#777">Vidéo</div>
<div class="t" style="left:1738px;top:202px;font-size:14.3px;line-height:19px;color:#777">Documents</div>
<div class="t" style="left:1837px;top:202px;font-size:14.3px;line-height:19px;color:#777">Archives</div>
<div style="position:absolute;left:1601px;top:204px;width:1px;height:14px;background:#d6d6d6"></div><div style="position:absolute;left:1662px;top:204px;width:1px;height:14px;background:#d6d6d6"></div><div style="position:absolute;left:1724px;top:204px;width:1px;height:14px;background:#d6d6d6"></div><div style="position:absolute;left:1823px;top:204px;width:1px;height:14px;background:#d6d6d6"></div><div style="position:absolute;left:1528px;top:348px;width:9px;height:61px;background:#c2c2c2;border-radius:4px 0 0 4px"></div>
<svg style="position:absolute;left:1530px;top:374px" width="6" height="8" viewBox="0 0 6 8"><path d="M0.5 0.5 L5.5 4 L0.5 7.5 Z" fill="#f2f2f2"/></svg>
<svg style="position:absolute;left:0;top:0;pointer-events:none" width="1901" height="878" viewBox="0 0 1901 878">
  <defs><filter id="ds" x="-20%" y="-20%" width="150%" height="150%"><feGaussianBlur in="SourceAlpha" stdDeviation="1.6"/><feOffset dx="1.5" dy="1.5"/><feComponentTransfer><feFuncA type="linear" slope="0.45"/></feComponentTransfer><feMerge><feMergeNode/><feMergeNode in="SourceGraphic"/></feMerge></filter></defs>
  <g filter="url(#ds)">
    <rect x="702.5" y="550.2" width="47.2" height="48.2" rx="5.5" fill="none" stroke="#ee1c25" stroke-width="2"/>
    <path d="M716.2 587.3 L693.6 605.3 L701.6 604.2 Q683 640 654.6 706 Q679 672 709.8 608.6 L712.9 615 Z" fill="#ff0000"/>
  </g>
</svg>
</body>
</html>
